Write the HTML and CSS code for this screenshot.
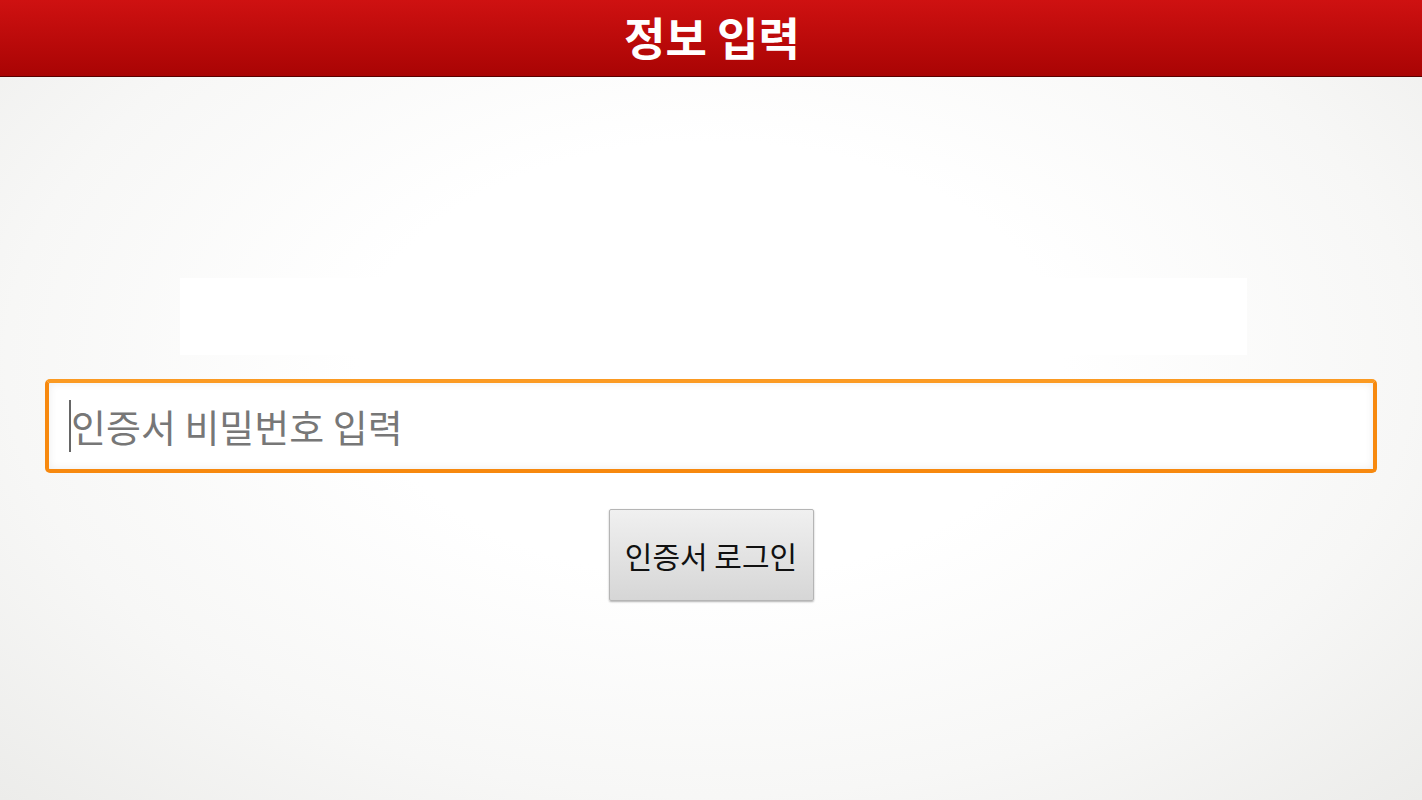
FILE: index.html
```html
<!DOCTYPE html>
<html>
<head>
  <meta charset="utf-8">
  <title>정보 입력</title>
  <link rel="stylesheet" href="styles.css">
</head>
<body>
  <div class="header">정보 입력</div>
  <div class="content">
    <div class="cert-box"></div>
    <div class="password">
      <span class="caret"></span>
      <span class="placeholder">인증서 비밀번호 입력</span>
    </div>
    <button class="login">인증서 로그인</button>
  </div>
</body>
</html>
```

FILE: styles.css
```css
html, body {
  margin: 0;
  height: 100%;
}

body {
  font-family: "Noto Sans CJK KR", "Noto Sans", sans-serif;
  background: radial-gradient(ellipse at 50% 45%, #ffffff 35%, #f7f7f6 70%, #ececea 100%);
  overflow: hidden;
}

.header {
  height: 76px;
  border-bottom: 1px solid #5a0000;
  background: linear-gradient(#cf1111, #a90404);
  color: #fff;
  font-size: 45px;
  font-weight: bold;
  text-align: center;
  line-height: 74px;
  padding-left: 2px;
}

.content {
  display: flex;
  flex-direction: column;
  align-items: center;
  padding-top: 201px;
}

.cert-box {
  width: 1067px;
  height: 77px;
  margin-left: 4px;
  background: #fff;
}

.password {
  box-sizing: border-box;
  width: 1332px;
  height: 94px;
  margin-top: 24px;
  border: 4px solid #f7890f;
  border-top-color: #fb9a22;
  border-radius: 5px;
  background: #fff;
  box-shadow: inset 0 0 8px rgba(0, 0, 0, 0.08);
  display: flex;
  align-items: center;
  padding-left: 20px;
}

.caret {
  width: 2px;
  height: 52px;
  background: #666;
}

.placeholder {
  font-size: 38px;
  color: #777;
  margin-bottom: 2px;
}

.login {
  margin-top: 36px;
  width: 205px;
  height: 92px;
  border: 1px solid #b5b5b5;
  border-radius: 2px;
  background: linear-gradient(#f0f0f0, #d6d6d6);
  box-shadow: 0 1px 2px rgba(0, 0, 0, 0.3);
  font-family: "Noto Sans CJK KR", sans-serif;
  font-size: 30px;
  color: #111;
  cursor: pointer;
}
```
